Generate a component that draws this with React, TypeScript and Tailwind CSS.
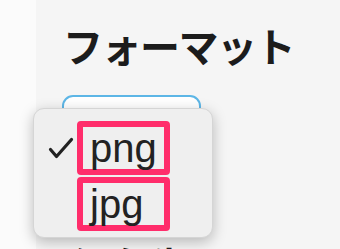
const options = [
  { label: "png", selected: true },
  { label: "jpg", selected: false },
];

function Tick() {
  return (
    <svg
      viewBox="0 0 26 22"
      className="absolute left-[-29px] top-[16px] h-[22px] w-[26px]"
      fill="none"
      stroke="#222"
      strokeWidth={3.2}
      strokeLinecap="round"
      strokeLinejoin="round"
    >
      <path d="M2.5 12.5 L8.5 19.5 L23.5 2.5" />
    </svg>
  );
}

export default function App() {
  return (
    <div className="relative flex h-[249px] w-[340px] overflow-hidden bg-[#f5f5f5]">
      <div className="w-[36px] shrink-0 bg-[#fbfbfb]" />
      <div className="flex flex-col pl-[27px] pt-[25px]">
        <h2 className="shrink-0 text-[40px] font-bold leading-none tracking-[-1.5px] text-[#1c1c1c] [font-family:'Noto_Sans_CJK_JP',sans-serif]">
          フォーマット
        </h2>
        <div className="ml-[-1px] mt-[30px] h-[40px] w-[139px] shrink-0 rounded-[11px] border-2 border-[#5db6e6] bg-white" />
        <div className="ml-[6px] mt-[110px] shrink-0 text-[40px] font-bold leading-none text-[#1c1c1c] [font-family:'Noto_Sans_CJK_JP',sans-serif]">
          保存先
        </div>
      </div>

      <div className="absolute left-[33px] top-[108px] h-[130px] w-[180px] rounded-[11px] border border-[#d5d5d5] bg-[#efefef] shadow-[0_4px_14px_rgba(0,0,0,0.25)]">
        <ul className="flex flex-col gap-[2px] pl-[43px] pt-[12px]">
          {options.map((o) => (
            <li key={o.label} className="relative">
              {o.selected ? <Tick /> : null}
              <div className="h-[54px] w-[93px] rounded-[4px] border-[6px] border-[#ff2d6b] pl-[7px] pt-[1px]">
                <span className="block text-[40px] leading-none text-[#222] [font-family:'Liberation_Sans',sans-serif]">
                  {o.label}
                </span>
              </div>
            </li>
          ))}
        </ul>
      </div>
    </div>
  );
}
